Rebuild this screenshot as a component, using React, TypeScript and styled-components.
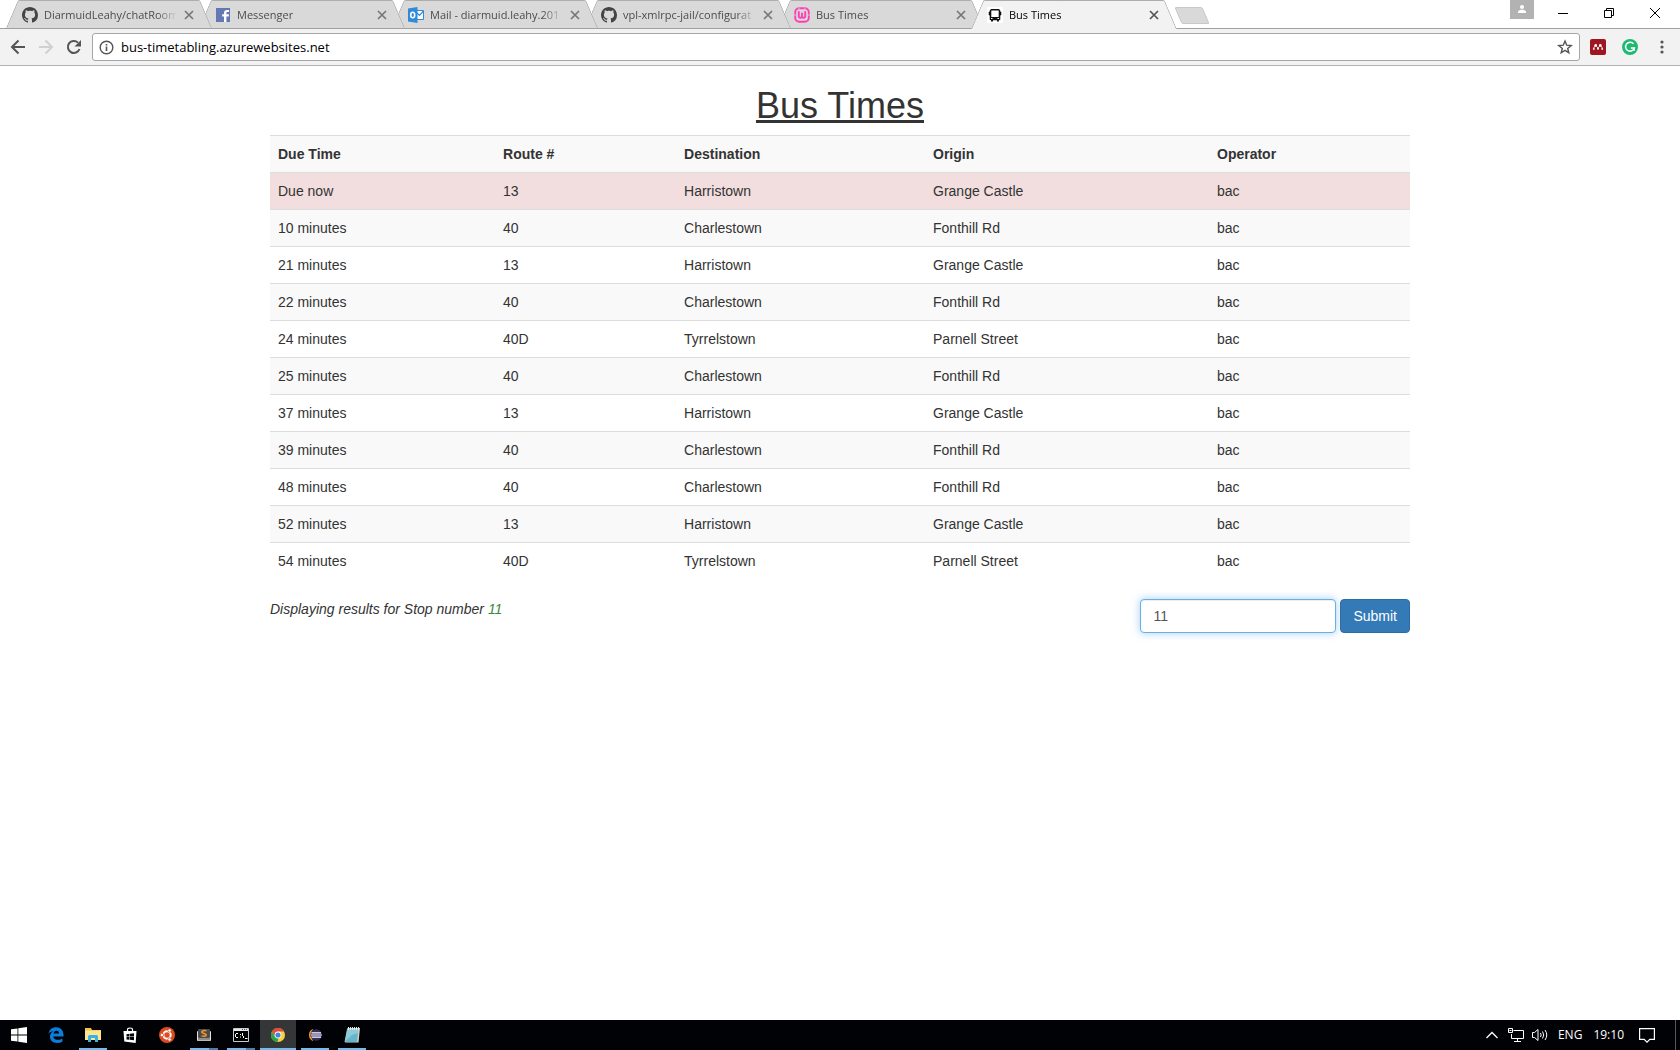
import React from 'react';
import styled, { createGlobalStyle, css } from 'styled-components';

const uiFont = '"Open Sans", "Noto Sans", sans-serif';

const GlobalStyle = createGlobalStyle`
  *, *::before, *::after { box-sizing: border-box; }
  body {
    margin: 0;
    background: #fff;
    color: #333;
    font: 14px/20px "Liberation Sans", Arial, sans-serif;
  }
  button, input { font: inherit; }
  svg { display: block; flex: none; }
`;

const Screen = styled.div`
  min-height: 100vh;
  display: flex;
  flex-direction: column;
`;

/* ---------- Browser: tab strip ---------- */

const TabStrip = styled.header`
  height: 29px;
  display: flex;
  padding: 0 2px 0 6px;
  border-bottom: 1px solid #a0a0a0;
  font-family: ${uiFont};
`;

const TabList = styled.nav`
  display: flex;
  height: 28px;
`;

const Tab = styled.div<{ $active?: boolean; $order: number }>`
  position: relative;
  z-index: ${p => (p.$active ? 20 : p.$order)};
  width: 205px;
  height: ${p => (p.$active ? 29 : 28)}px;
  margin-right: -12px;
  padding: ${p => (p.$active ? 1 : 2)}px 14px 0 16px;
  display: flex;
  align-items: center;
  gap: 4px;
  color: ${p => (p.$active ? '#000' : '#4c4c4c')};

  &::before,
  &::after {
    content: '';
    position: absolute;
    z-index: -1;
    top: 0;
    bottom: 0;
    width: 50%;
    background: ${p => (p.$active ? '#f2f2f2' : '#d9d9d9')};
    border: 0 solid #adadad;
    border-top-width: 1px;
  }
  &::before {
    left: 0;
    border-left-width: 1px;
    border-top-left-radius: 2px;
    transform: skewX(-23deg);
    transform-origin: bottom;
  }
  &::after {
    right: 0;
    border-right-width: 1px;
    border-top-right-radius: 2px;
    transform: skewX(23deg);
    transform-origin: bottom;
  }
`;

const TabTitle = styled.button`
  flex: 1;
  min-width: 0;
  padding: 0 0 0 2px;
  border: 0;
  background: none;
  color: inherit;
  font-size: 11px;
  line-height: 20px;
  text-align: left;
  white-space: nowrap;
  overflow: hidden;
  mask-image: linear-gradient(to right, #000 calc(100% - 20px), transparent);
`;

const IconButton = styled.button<{ $width?: number; $height?: number }>`
  width: ${p => p.$width ?? 16}px;
  height: ${p => p.$height ?? 16}px;
  flex: none;
  padding: 0;
  border: 0;
  background: none;
  display: flex;
  align-items: center;
  justify-content: center;
`;

const NewTab = styled.button`
  width: 28px;
  height: 17px;
  margin: 7px 0 0 14px;
  padding: 0;
  border: 1px solid #c8c8c8;
  border-radius: 2px;
  background: #d9d9d9;
  transform: skewX(23deg);
`;

const WindowButtons = styled.div`
  margin-left: auto;
  display: flex;
  align-items: flex-start;
`;

const Profile = styled(IconButton)`
  margin-right: 6px;
  background: #b2b2b2;
`;

/* ---------- Browser: toolbar ---------- */

const Toolbar = styled.div`
  height: 37px;
  padding: 0 4px;
  display: flex;
  align-items: center;
  background: #f2f2f2;
  border-bottom: 1px solid #b3b3b3;
  font-family: ${uiFont};
`;

const Omnibox = styled.form`
  flex: 1;
  height: 28px;
  margin: 0 4px;
  padding: 0 6px;
  display: flex;
  align-items: center;
  gap: 7px;
  background: #fff;
  border: 1px solid #a6a6a6;
  border-radius: 3px;
`;

const Address = styled.input`
  flex: 1;
  min-width: 0;
  padding: 0;
  border: 0;
  outline: 0;
  background: none;
  color: #000;
  font-size: 13px;
  line-height: 20px;
`;

/* ---------- Page ---------- */

const Container = styled.main`
  flex: 1;
  width: 100%;
  max-width: 1170px;
  margin: 0 auto;
  padding: 0 15px;
`;

const Heading = styled.h1`
  margin: 20px 0 10px;
  font-size: 36px;
  line-height: 39px;
  font-weight: 400;
  text-align: center;
  text-decoration: underline;
`;

const Table = styled.table`
  width: 100%;
  margin-bottom: 20px;
  border-collapse: collapse;

  th, td {
    padding: 8px;
    border-top: 1px solid #ddd;
    text-align: left;
    vertical-align: top;
  }
`;

const Row = styled.tr<{ $due?: boolean }>`
  &:nth-child(odd) { background: #f9f9f9; }
  ${p => p.$due && css`&& { background: #f2dede; }`}
`;

const Footer = styled.div`
  display: flex;
  justify-content: space-between;
  align-items: flex-start;
`;

const StopNumber = styled.span`
  color: #3a8a3a;
`;

const StopForm = styled.form`
  display: flex;
  gap: 4px;
`;

const StopInput = styled.input`
  width: 196px;
  height: 34px;
  padding: 6px 12px;
  border: 1px solid #66afe9;
  border-radius: 4px;
  outline: 0;
  color: #555;
  background: #fff;
  box-shadow: inset 0 1px 1px rgba(0, 0, 0, 0.075), 0 0 8px rgba(102, 175, 233, 0.6);
`;

const Submit = styled.button`
  height: 34px;
  padding: 6px 12px;
  border: 1px solid #2e6da4;
  border-radius: 4px;
  background: #337ab7;
  color: #fff;
`;

/* ---------- Taskbar ---------- */

const Taskbar = styled.footer`
  height: 30px;
  display: flex;
  background: #010206;
  color: #fff;
  font-family: ${uiFont};
  font-size: 12px;
`;

const TaskList = styled.nav`
  display: flex;
`;

const TaskButton = styled.button<{ $state?: 'open' | 'stacked' | 'active' }>`
  position: relative;
  width: 36px;
  margin-left: 1px;
  padding: 0;
  border: 0;
  display: flex;
  align-items: center;
  justify-content: center;
  background: ${p => (p.$state === 'active' ? '#353638' : 'none')};

  ${p => p.$state && css`
    &::after {
      content: '';
      position: absolute;
      bottom: 0;
      height: 2px;
      left: ${p.$state === 'active' ? 0 : 4}px;
      right: ${p.$state === 'active' ? 0 : 4}px;
      background: ${p.$state === 'stacked'
        ? 'linear-gradient(to right, #76b9ed 19px, #4d7fa8 19px)'
        : '#76b9ed'};
    }
  `}
`;

const Tray = styled.div`
  margin-left: auto;
  display: flex;
  align-items: center;
`;

const TrayText = styled.button`
  padding: 0;
  margin: 0 5px 0 6px;
  border: 0;
  background: none;
  color: inherit;
  line-height: 20px;
`;

const ShowDesktop = styled.button`
  width: 5px;
  height: 30px;
  margin-left: 10px;
  padding: 0;
  border: 0;
  border-left: 1px solid #55565a;
  background: none;
`;

/* ---------- Icons ---------- */

const GithubIcon = () => (
  <svg width="16" height="16" viewBox="0 0 16 16" fill="#444">
    <path d="M8 0C3.580 0 0 3.580 0 8c0 3.540 2.290 6.530 5.470 7.590.4.070.55-.17.55-.38 0-.19-.01-.82-.01-1.490-2.010.37-2.530-.49-2.690-.94-.09-.23-.48-.94-.82-1.130-.28-.15-.68-.52-.01-.53.63-.01 1.080.58 1.230.82.72 1.210 1.870.87 2.330.66.070-.52.28-.87.51-1.070-1.780-.2-3.640-.89-3.640-3.950 0-.87.31-1.590.82-2.150-.08-.2-.36-1.020.080-2.120 0 0 .67-.21 2.200.82.64-.18 1.320-.27 2-.27s1.360.09 2 .27c1.530-1.040 2.200-.82 2.200-.82.44 1.100.16 1.920.08 2.120.51.56.82 1.270.82 2.150 0 3.070-1.870 3.750-3.650 3.950.29.25.54.73.54 1.480 0 1.070-.01 1.930-.01 2.200 0 .21.15.46.55.38A8.010 8.010 0 0 0 16 8c0-4.420-3.580-8-8-8z" />
  </svg>
);

const CloseIcon = ({ color }: { color: string }) => (
  <svg width="10" height="10" viewBox="0 0 10 10" stroke={color} strokeWidth="1.700">
    <path d="M1 1l8 8M9 1l-8 8" />
  </svg>
);

const FacebookIcon = () => (
  <svg width="16" height="16" viewBox="0 0 16 16">
    <path fill="#6478b4" d="M1 1h14v14H1z" />
    <path fill="#fff" d="M9 15V9.400H7.200V7.300H9V6c0-2 1.100-3 2.900-3H14v2h-1.300c-1 0-1.300.4-1.300 1.200v1.100H14l-.3 2.100h-2.300V15z" />
  </svg>
);

const OutlookIcon = () => (
  <svg width="16" height="16" viewBox="0 0 16 16">
    <path fill="#fff" stroke="#2f8ad8" d="M8.500 3.500h7v9h-7z" />
    <path fill="none" stroke="#2f8ad8" strokeWidth="1.200" d="M9 6l2.500 2.500L15.500 4" />
    <path fill="#2f8ad8" d="M0 1.500L9.500 0v16L0 14.500z" />
    <ellipse cx="4.700" cy="8" rx="2" ry="2.700" fill="none" stroke="#fff" strokeWidth="1.600" />
  </svg>
);

const WampIcon = () => (
  <svg width="16" height="16" viewBox="0 0 16 16" fill="none" stroke="#ff3eb5">
    <rect x="1.200" y="1.200" width="13.600" height="13.600" rx="4" strokeWidth="1.900" />
    <path strokeWidth="1.900" strokeLinecap="round" strokeLinejoin="round" d="M4.800 5v4.200c0 2 3.200 2 3.200 0V6.500v2.700c0 2 3.200 2 3.200 0V5" />
    <path stroke="#d9d9d9" strokeWidth=".8" d="M0 8h2.500M13.500 8H16M5 .5v2M11 .5v2" />
  </svg>
);

const BusIcon = () => (
  <svg width="16" height="16" viewBox="0 0 16 16">
    <path fill="#fff" d="M0 0h16v16H0z" />
    <path fill="#111" fillRule="evenodd" d="M4 2h8l1.300 1.500v1l1 .5v3l-1 .5v4.200l-1.300.5V14.500h-2V13.200H6v1.300H4v-1.300l-1.300-.5V8.500l-1-.5V5l1-.5v-1zM4.300 3.500v6.500h7.400V3.500zM4 11v1h1.500v-1zm6.500 0v1H12v-1z" />
  </svg>
);

const PersonIcon = () => (
  <svg width="10" height="10" viewBox="0 0 10 10" fill="#fff">
    <circle cx="5" cy="2" r="2" />
    <path d="M1 8V7C1 5.300 3.500 4.800 5 4.800s4 .5 4 2.200v1z" />
  </svg>
);

const MinimizeIcon = () => (
  <svg width="10" height="10" viewBox="0 0 10 10" stroke="#000"><path d="M0 5.500h10" /></svg>
);

const RestoreIcon = () => (
  <svg width="10" height="10" viewBox="0 0 10 10" fill="none" stroke="#000">
    <path d="M.5 2.500h7v7h-7zM2.500 2.500v-2h7v7h-2" />
  </svg>
);

const WindowCloseIcon = () => (
  <svg width="10" height="10" viewBox="0 0 10 10" stroke="#000"><path d="M0 0l10 10M10 0L0 10" /></svg>
);

const BackIcon = () => (
  <svg width="16" height="16" viewBox="0 0 16 16" fill="none" stroke="#555" strokeWidth="2">
    <path d="M15 8H2.500M8.500 1.500L2 8l6.500 6.500" />
  </svg>
);

const ForwardIcon = () => (
  <svg width="16" height="16" viewBox="0 0 16 16" fill="none" stroke="#d0d0d0" strokeWidth="2">
    <path d="M1 8h12.500M7.500 1.500L14 8l-6.500 6.500" />
  </svg>
);

const ReloadIcon = () => (
  <svg width="16" height="16" viewBox="0 0 16 16">
    <path fill="none" stroke="#555" strokeWidth="2" d="M13.500 10A6 6 0 1 1 12 3.600" />
    <path fill="#555" d="M15 1v6.500H8.500z" />
  </svg>
);

const InfoIcon = () => (
  <svg width="15" height="15" viewBox="0 0 15 15">
    <circle cx="7.500" cy="7.500" r="6.300" fill="none" stroke="#555" strokeWidth="1.400" />
    <path fill="#555" d="M6.700 6.500h1.600V11H6.700zM6.700 4h1.600v1.500H6.700z" />
  </svg>
);

const StarIcon = () => (
  <svg width="16" height="16" viewBox="0 0 16 16" fill="none" stroke="#555" strokeWidth="1.400">
    <path d="M8 2l1.700 4.200 4.500.3-3.500 2.900 1.100 4.400L8 11.400l-3.800 2.400 1.100-4.400-3.500-2.900 4.500-.3z" />
  </svg>
);

const MendeleyIcon = () => (
  <svg width="16" height="16" viewBox="0 0 16 16">
    <rect width="16" height="16" rx="2" fill="#9d1620" />
    <g fill="#fff">
      <circle cx="5.700" cy="6.200" r="1.300" />
      <circle cx="10.300" cy="6.200" r="1.300" />
      <circle cx="3.800" cy="9.900" r=".9" />
      <circle cx="12.200" cy="9.900" r=".9" />
      <circle cx="8" cy="9.800" r="1" />
    </g>
    <path fill="none" stroke="#fff" d="M3.800 9.500c.2-1.800.8-2.300 1.900-2.300S7.600 8 8 9.500c.4-1.500 1.200-2.300 2.300-2.300s1.700.5 1.900 2.300" />
  </svg>
);

const GrammarlyIcon = () => (
  <svg width="16" height="16" viewBox="0 0 16 16">
    <circle cx="8" cy="8" r="8" fill="#1fba72" />
    <path fill="none" stroke="#fff" strokeWidth="1.500" d="M11.500 4.700A4.500 4.500 0 1 0 12.400 9H8.800" />
    <path fill="none" stroke="#fff" strokeWidth="1.300" d="M12.200 8.500v3.200" />
  </svg>
);

const MenuIcon = () => (
  <svg width="4" height="14" viewBox="0 0 4 14" fill="#555">
    <circle cx="2" cy="2" r="1.600" />
    <circle cx="2" cy="7" r="1.600" />
    <circle cx="2" cy="12" r="1.600" />
  </svg>
);

const StartIcon = () => (
  <svg width="16" height="16" viewBox="0 0 16 16" fill="#fff">
    <path d="M0 2.300l6.500-.9v6.200H0zM7.300 1.300L16 0v7.600H7.300zM0 8.400h6.500v6.200L0 13.700zM7.300 8.400H16V16l-8.700-1.300z" />
  </svg>
);

const EdgeIcon = () => (
  <svg width="16" height="16" viewBox="0 0 16 16">
    <path fill="#0b7ddb" d="M.5 7C1 3 4 .3 8.200.3c4.500 0 7.300 3.200 7.300 7.400v1.700H5.300c.1 2.200 2.200 3.400 4.600 3.400 1.700 0 3.200-.5 4.500-1.300v3.300c-1.500.8-3.200 1.200-5.200 1.200-4.500 0-7.200-2.500-7.200-6.200 0-2.500 1.300-4.500 3.600-5.700C3 4.500 1.500 5.500.5 7zm4.900-.4h5.700c0-1.700-.9-2.800-2.600-2.800-1.600 0-2.800 1.200-3.100 2.800z" />
  </svg>
);

const ExplorerIcon = () => (
  <svg width="16" height="16" viewBox="0 0 16 16">
    <path fill="#f0c24a" d="M0 1h6l1 2h9v3H0z" />
    <path fill="#fde592" d="M0 3.500h16V13H0z" />
    <path fill="#38b0e8" d="M3 9.500Q3 8 4.500 8h7Q13 8 13 9.500V15h-3v-4H6v4H3z" />
  </svg>
);

const StoreIcon = () => (
  <svg width="16" height="16" viewBox="0 0 16 16">
    <path fill="none" stroke="#fff" strokeWidth="1.200" d="M5.500 4V2.500q0-1.500 2.500-1.500t2.500 1.500V4" />
    <path fill="#fff" d="M1.500 4h13l-.8 12-11.400-1.500z" />
    <path fill="#010206" d="M4.500 7.200l3-.4v2.800h-3zM8 6.700l4-.5v3.400H8zM4.500 10.100h3v2.700l-3-.4zM8 10.100h4v3.200l-4-.5z" />
  </svg>
);

const UbuntuIcon = () => (
  <svg width="16" height="16" viewBox="0 0 16 16">
    <circle cx="8" cy="8" r="8" fill="#dd4b20" />
    <circle cx="8" cy="8" r="3.700" fill="none" stroke="#fff" strokeWidth="2" />
    <g fill="#fff" stroke="#dd4b20" strokeWidth=".8">
      <circle cx="2.900" cy="8" r="1.700" />
      <circle cx="10.600" cy="3.500" r="1.700" />
      <circle cx="10.600" cy="12.500" r="1.700" />
    </g>
  </svg>
);

const SublimeIcon = () => (
  <svg width="14" height="14" viewBox="0 0 14 14">
    <rect y="3" width="14" height="10" rx="1" fill="#e4e4e2" />
    <path fill="#8e8e8a" d="M1 10h12v2.500H1z" />
    <rect x="1" y="1" width="12" height="9" rx="1" fill="#4a4a4a" />
    <path fill="none" stroke="#f39b2d" strokeWidth="1.500" d="M9.500 2.900C7 2.200 4.800 2.700 4.800 4c0 1.800 4.500 1.200 4.500 3 0 1.400-2.600 1.500-4.800.9" />
  </svg>
);

const TerminalIcon = () => (
  <svg width="16" height="14" viewBox="0 0 16 14">
    <path fill="#000" stroke="#c8ccd0" d="M.5.5h15v13H.5z" />
    <path fill="#e8e8e8" d="M1 1h14v2H1z" />
    <path fill="#4a5a80" d="M9 1h1v1H9zM11 1h1v1h-1zM13 1h1v1h-1z" />
    <path fill="none" stroke="#fff" d="M5 5.500H3M2.500 6v3M3 9.500h2M7.500 6v1M7.500 8.500v1M9.500 5v3M10.500 8v2M12 10.500h2.500" />
  </svg>
);

const ChromeIcon = () => (
  <svg width="14" height="14" viewBox="0 0 14 14">
    <circle cx="7" cy="7" r="7" fill="#fdd03b" />
    <path fill="#e24a3b" d="M.9 3.500a7 7 0 0 1 12.200 0H7L4.400 8.700z" />
    <path fill="#2ba24c" d="M.9 3.500L4 8.700 7.500 10.500 6.500 14A7 7 0 0 1 .9 3.500z" />
    <circle cx="7" cy="7" r="3.400" fill="#fff" />
    <circle cx="7" cy="7" r="2.600" fill="#4285e8" />
  </svg>
);

const EclipseIcon = () => (
  <svg width="14" height="14" viewBox="0 0 14 14">
    <path fill="#f39a20" d="M5.500.8A6.500 6.500 0 0 0 5.500 13.200 9 9 0 0 1 5.500.8z" />
    <circle cx="8.200" cy="7" r="5.800" fill="#352b63" />
    <path stroke="#fff" strokeWidth="1.200" d="M3.500 4.800h9.500M3 7h10.800M3.500 9.200h9.500" />
  </svg>
);

const NotepadIcon = () => (
  <svg width="16" height="16" viewBox="0 0 16 16">
    <path fill="#d8d3c4" d="M3.500 1H16l-1.500 14.500H1z" />
    <path fill="#8ccbd9" d="M3 2h11.500L13 15H.5z" />
    <path fill="#4fa6c0" d="M8 8l6-2-1 9H.5z" opacity=".6" />
    <path stroke="#e6e6e6" d="M4.500 0v3M6.500 0v3M8.500 0v3M10.500 0v3M12.500 0v3M14.500 0v3" />
  </svg>
);

const ChevronIcon = () => (
  <svg width="12" height="8" viewBox="0 0 12 8" fill="none" stroke="#fff" strokeWidth="1.300">
    <path d="M.5 7L6 1.500 11.500 7" />
  </svg>
);

const NetworkIcon = () => (
  <svg width="16" height="14" viewBox="0 0 16 14" fill="none" stroke="#fff">
    <path d="M5.500 2.500h10v8h-12V6M9.500 10.500v3M6 13.500h7M.5.500h4v4h-4zM1.500 2.500h2" />
  </svg>
);

const SpeakerIcon = () => (
  <svg width="16" height="14" viewBox="0 0 16 14" fill="none" stroke="#fff">
    <path d="M.5 4.500h2L6 1.500v11L2.500 9.500h-2zM8.500 5q1.300 2 0 4M10.500 3.500q2.500 3.500 0 7M13 2q3.500 5 0 10" />
  </svg>
);

const NotificationIcon = () => (
  <svg width="16" height="16" viewBox="0 0 16 16" fill="none" stroke="#fff" strokeWidth="1.200">
    <path d="M.6 1.600h14.800v10.800h-4.600L8 15.200l-2.800-2.800H.6z" />
  </svg>
);

/* ---------- Data ---------- */

const tabs = [
  { title: 'DiarmuidLeahy/chatRoom', icon: <GithubIcon /> },
  { title: 'Messenger', icon: <FacebookIcon /> },
  { title: 'Mail - diarmuid.leahy.201', icon: <OutlookIcon /> },
  { title: 'vpl-xmlrpc-jail/configurat', icon: <GithubIcon /> },
  { title: 'Bus Times', icon: <WampIcon /> },
  { title: 'Bus Times', icon: <BusIcon />, active: true },
];

const columns = [
  { label: 'Due Time', width: '19.74%' },
  { label: 'Route #', width: '15.88%' },
  { label: 'Destination', width: '21.84%' },
  { label: 'Origin', width: '24.91%' },
  { label: 'Operator', width: '17.63%' },
];

const buses = [
  ['Due now', '13', 'Harristown', 'Grange Castle', 'bac'],
  ['10 minutes', '40', 'Charlestown', 'Fonthill Rd', 'bac'],
  ['21 minutes', '13', 'Harristown', 'Grange Castle', 'bac'],
  ['22 minutes', '40', 'Charlestown', 'Fonthill Rd', 'bac'],
  ['24 minutes', '40D', 'Tyrrelstown', 'Parnell Street', 'bac'],
  ['25 minutes', '40', 'Charlestown', 'Fonthill Rd', 'bac'],
  ['37 minutes', '13', 'Harristown', 'Grange Castle', 'bac'],
  ['39 minutes', '40', 'Charlestown', 'Fonthill Rd', 'bac'],
  ['48 minutes', '40', 'Charlestown', 'Fonthill Rd', 'bac'],
  ['52 minutes', '13', 'Harristown', 'Grange Castle', 'bac'],
  ['54 minutes', '40D', 'Tyrrelstown', 'Parnell Street', 'bac'],
];

const tasks: { name: string; icon: React.ReactNode; state?: 'open' | 'stacked' | 'active' }[] = [
  { name: 'Start', icon: <StartIcon /> },
  { name: 'Edge', icon: <EdgeIcon /> },
  { name: 'File Explorer', icon: <ExplorerIcon />, state: 'open' },
  { name: 'Store', icon: <StoreIcon /> },
  { name: 'Ubuntu', icon: <UbuntuIcon /> },
  { name: 'Sublime Text', icon: <SublimeIcon />, state: 'stacked' },
  { name: 'Command Prompt', icon: <TerminalIcon />, state: 'stacked' },
  { name: 'Chrome', icon: <ChromeIcon />, state: 'active' },
  { name: 'Eclipse', icon: <EclipseIcon />, state: 'open' },
  { name: 'Notepad', icon: <NotepadIcon />, state: 'open' },
];

export default function App() {
  return (
    <Screen>
      <GlobalStyle />
      <TabStrip>
        <TabList aria-label="Tabs">
          {tabs.map((tab, i) => (
            <Tab key={i} $active={tab.active} $order={10 - i}>
              {tab.icon}
              <TabTitle type="button">{tab.title}</TabTitle>
              <IconButton type="button" aria-label="Close tab">
                <CloseIcon color={tab.active ? '#555' : '#777'} />
              </IconButton>
            </Tab>
          ))}
        </TabList>
        <NewTab type="button" aria-label="New tab" />
        <WindowButtons>
          <Profile type="button" aria-label="Profile" $width={24} $height={19}><PersonIcon /></Profile>
          <IconButton type="button" aria-label="Minimize" $width={46} $height={26}><MinimizeIcon /></IconButton>
          <IconButton type="button" aria-label="Restore" $width={46} $height={26}><RestoreIcon /></IconButton>
          <IconButton type="button" aria-label="Close" $width={46} $height={26}><WindowCloseIcon /></IconButton>
        </WindowButtons>
      </TabStrip>

      <Toolbar>
        <IconButton type="button" aria-label="Back" $width={28} $height={28}><BackIcon /></IconButton>
        <IconButton type="button" aria-label="Forward" $width={28} $height={28}><ForwardIcon /></IconButton>
        <IconButton type="button" aria-label="Reload" $width={28} $height={28}><ReloadIcon /></IconButton>
        <Omnibox onSubmit={e => e.preventDefault()}>
          <InfoIcon />
          <Address type="text" aria-label="Address" defaultValue="bus-timetabling.azurewebsites.net" />
          <IconButton type="button" aria-label="Bookmark"><StarIcon /></IconButton>
        </Omnibox>
        <IconButton type="button" aria-label="Mendeley" $width={28} $height={28}><MendeleyIcon /></IconButton>
        <IconButton type="button" aria-label="Grammarly" $width={36} $height={28}><GrammarlyIcon /></IconButton>
        <IconButton type="button" aria-label="Menu" $width={28} $height={28}><MenuIcon /></IconButton>
      </Toolbar>

      <Container>
        <Heading>Bus Times</Heading>
        <Table>
          <colgroup>
            {columns.map(c => <col key={c.label} style={{ width: c.width }} />)}
          </colgroup>
          <tbody>
            <Row>
              {columns.map(c => <th key={c.label} scope="col">{c.label}</th>)}
            </Row>
            {buses.map((bus, i) => (
              <Row key={i} $due={bus[0] === 'Due now'}>
                {bus.map((value, j) => <td key={j}>{value}</td>)}
              </Row>
            ))}
          </tbody>
        </Table>
        <Footer>
          <em>Displaying results for Stop number <StopNumber>11</StopNumber></em>
          <StopForm onSubmit={e => e.preventDefault()}>
            <StopInput type="text" aria-label="Stop number" defaultValue="11" />
            <Submit type="submit">Submit</Submit>
          </StopForm>
        </Footer>
      </Container>

      <Taskbar>
        <TaskList aria-label="Taskbar">
          {tasks.map(t => (
            <TaskButton key={t.name} type="button" aria-label={t.name} $state={t.state}>{t.icon}</TaskButton>
          ))}
        </TaskList>
        <Tray>
          <IconButton type="button" aria-label="Show hidden icons" $width={24} $height={30}><ChevronIcon /></IconButton>
          <IconButton type="button" aria-label="Network" $width={24} $height={30}><NetworkIcon /></IconButton>
          <IconButton type="button" aria-label="Volume" $width={24} $height={30}><SpeakerIcon /></IconButton>
          <TrayText type="button">ENG</TrayText>
          <TrayText type="button">19:10</TrayText>
          <IconButton type="button" aria-label="Notifications" $width={36} $height={30}><NotificationIcon /></IconButton>
          <ShowDesktop type="button" aria-label="Show desktop" />
        </Tray>
      </Taskbar>
    </Screen>
  );
}
